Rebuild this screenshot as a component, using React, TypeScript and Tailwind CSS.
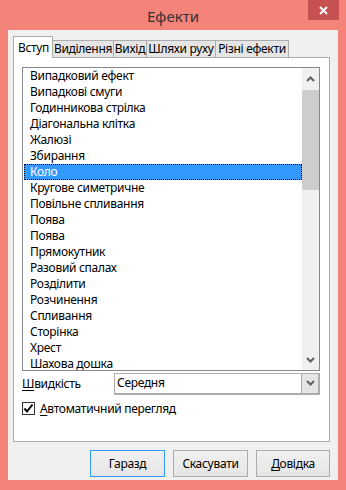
import React from 'react'

const effects = [
  'Випадковий ефект',
  'Випадкові смуги',
  'Годинникова стрілка',
  'Діагональна клітка',
  'Жалюзі',
  'Збирання',
  'Коло',
  'Кругове симетричне',
  'Повільне спливання',
  'Поява',
  'Поява',
  'Прямокутник',
  'Разовий спалах',
  'Розділити',
  'Розчинення',
  'Спливання',
  'Сторінка',
  'Хрест',
  'Шахова дошка',
]

const tabs = [
  { label: 'Виділення', w: 'w-[61px]' },
  { label: 'Вихід', w: 'w-[33px]' },
  { label: 'Шляхи руху', w: 'w-[69px]' },
  { label: 'Різні ефекти', w: 'w-[73px]' },
]

const Chevron = ({ up }: { up?: boolean }) => (
  <svg width="9" height="6" viewBox="0 0 9 6" className="block">
    <path
      d={up ? 'M1 5 L4.5 1.5 L8 5' : 'M1 1 L4.5 4.5 L8 1'}
      fill="none"
      stroke="#606060"
      strokeWidth="2"
    />
  </svg>
)

export default function App() {
  return (
    <div
      className="w-[346px] h-[490px] bg-[#f4837a] flex flex-col px-[8px] pb-[10px] text-[12px] tracking-[-0.3px] text-black"
      style={{ fontFamily: '"Noto Sans", "Open Sans", sans-serif' }}
    >
      {/* title bar */}
      <div className="relative h-[30px] flex items-center justify-center">
        <span className="text-[15px] tracking-normal text-[#333] mt-[2px]">Ефекти</span>
        <div className="absolute right-[-1px] top-0 w-[31px] h-[20px] bg-[#c75050] flex items-center justify-center">
          <svg width="9" height="9" viewBox="0 0 9 9">
            <path d="M1 1 L8 8 M8 1 L1 8" stroke="white" strokeWidth="2" />
          </svg>
        </div>
      </div>

      {/* client */}
      <div className="flex-1 bg-[#f0f0f0] flex flex-col pl-[5px] pr-[8px] pt-[6px]">
        <div className="flex items-end h-[22px] relative z-10">
          <div className="w-[40px] h-[22px] bg-white border border-b-0 border-[#acacac] flex items-center justify-center pl-[1px]">
            Вступ
          </div>
          {tabs.map(t => (
            <div
              key={t.label}
              className={`${t.w} h-[18px] bg-[#e5e5e5] border border-l-0 border-[#acacac] flex items-center justify-center leading-none whitespace-nowrap`}
            >
              {t.label}
            </div>
          ))}
        </div>

        {/* pane */}
        <div className="-mt-px h-[385px] bg-white border border-[#acacac] pl-[8px] pr-[9px] pt-[9px] flex flex-col">
          <div className="h-[304px] border border-[#828790] flex overflow-hidden">
            <div className="flex-1 flex flex-col">
              {effects.map((e, i) => (
                <div
                  key={i}
                  className={`h-[16px] shrink-0 flex items-center whitespace-nowrap ${
                    i === 6
                      ? 'bg-[#3399ff] text-white border border-dotted border-black ml-px pl-[5px]'
                      : 'pl-[7px]'
                  }`}
                >
                  {e}
                </div>
              ))}
            </div>
            <div className="w-[17px] bg-[#f0f0f0] flex flex-col">
              <div className="h-[22px] flex items-center justify-center">
                <Chevron up />
              </div>
              <div className="h-[100px] bg-[#cdcdcd]" />
              <div className="flex-1" />
              <div className="h-[18px] flex items-center justify-center mb-[1px]">
                <Chevron />
              </div>
            </div>
          </div>

          <div className="flex items-center mt-[1px] h-[23px]">
            <span className="w-[92px] leading-none">
              <span className="underline underline-offset-2">Ш</span>видкість
            </span>
            <div className="flex-1 h-[22px] border-2 border-[#acacac] border-l border-t bg-white flex items-center">
              <span className="flex-1 pl-[2px]">Середня</span>
              <div className="w-[17px] h-full bg-[#e5e5e5] border-l border-[#acacac] flex items-center justify-center">
                <Chevron />
              </div>
            </div>
          </div>

          <div className="flex items-center mt-[6px] h-[15px]">
            <div className="w-[13px] h-[13px] border border-[#333] bg-white flex items-center justify-center">
              <svg width="11" height="11" viewBox="0 0 11 11">
                <path d="M1.5 5.5 L4 8.5 L9.5 1.5" fill="none" stroke="#000" strokeWidth="2" />
              </svg>
            </div>
            <span className="ml-[5px]">
              <span className="underline underline-offset-2">А</span>втоматичний перегляд
            </span>
          </div>
        </div>

        {/* buttons */}
        <div className="flex justify-end gap-[8px] mt-[8px]">
          <button className="w-[75px] h-[27px] border border-[#3399ff] bg-gradient-to-b from-[#f0f0f0] to-[#e5e5e5]">
            Гаразд
          </button>
          <button className="w-[75px] h-[27px] border border-[#acacac] bg-gradient-to-b from-[#f0f0f0] to-[#e5e5e5]">
            Скасувати
          </button>
          <button className="w-[74px] h-[27px] border border-[#acacac] bg-gradient-to-b from-[#f0f0f0] to-[#e5e5e5]">
            <span className="underline underline-offset-2">Д</span>овідка
          </button>
        </div>
      </div>
    </div>
  )
}
